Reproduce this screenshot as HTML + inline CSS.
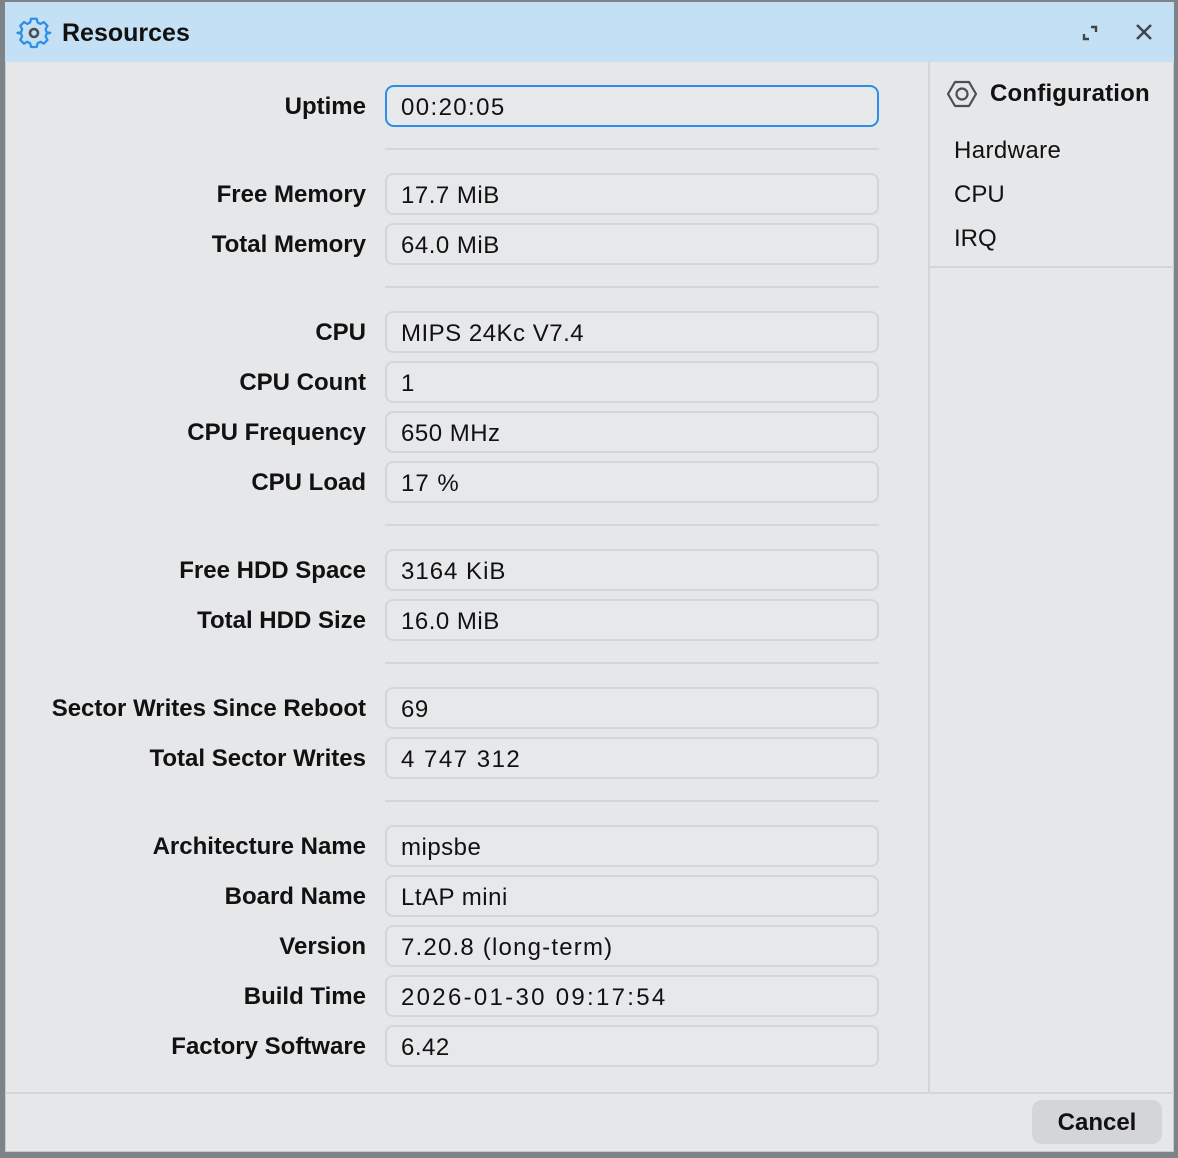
<!DOCTYPE html>
<html><head><meta charset="utf-8"><style>
*{box-sizing:border-box;margin:0;padding:0}
body{width:1178px;height:1158px;background:#7e8388;font-family:"Liberation Sans",sans-serif;position:relative;overflow:hidden;color:#111}
#win{position:absolute;left:5px;top:2px;width:1169px;height:1150px;background:#e6e7e9;border:1px solid #c6c9cd}
#title{position:absolute;left:5px;top:2px;width:1169px;height:60px;background:#c4e0f4}
.t{position:absolute;font-size:24px;white-space:nowrap}
.lab{position:absolute;right:812px;font-weight:bold;font-size:24px;white-space:nowrap;line-height:44px}
.f{position:absolute;left:385px;width:494px;height:42px;border:2px solid #d3d5d8;border-radius:8px;background:#e7e8ea;font-size:24px;line-height:41px;padding-left:14px;white-space:nowrap;letter-spacing:0.5px}
.sep{position:absolute;left:385px;width:494px;height:2px;background:#d3d5d8}
</style></head><body>
<div id="win"></div>
<div id="title"></div>
<svg style="position:absolute;left:16px;top:15px" width="36" height="36" viewBox="0 0 36 36"><path d="M15 3h6l1 4 3 1.5 3.5-2 4 4-2 3.5L31.5 17l4 1v0l-4 1-1 3 2 3.5-4 4-3.5-2L22 29l-1 4h-6l-1-4-3-1.5-3.5 2-4-4 2-3.5L4.5 19l-4-1 4-1 1-3-2-3.5 4-4 3.5 2L14 7z" fill="none" stroke="#2d8fe8" stroke-width="2.4" stroke-linejoin="round" transform="scale(0.94) translate(1,1)"/><circle cx="18" cy="18" r="4" fill="none" stroke="#4a4f55" stroke-width="2.6"/></svg>
<div class="t" style="left:62px;top:19px;font-weight:bold;font-size:25px">Resources</div>
<svg style="position:absolute;left:1081px;top:24px" width="18" height="18" viewBox="0 0 18 18"><path d="M3 10v5h5M10 3h5v5" fill="none" stroke="#3f4449" stroke-width="2.4"/></svg>
<svg style="position:absolute;left:1135px;top:23px" width="18" height="18" viewBox="0 0 18 18"><path d="M2 2L16 16M16 2L2 16" stroke="#3f4449" stroke-width="2.4"/></svg>
<div style="position:absolute;left:928px;top:62px;width:2px;height:1031px;background:#d3d5d8"></div>
<div style="position:absolute;left:930px;top:266px;width:244px;height:2px;background:#d3d5d8"></div>
<div style="position:absolute;left:5px;top:1092px;width:1169px;height:2px;background:#d3d5d8"></div>
<svg style="position:absolute;left:947px;top:80px" width="30" height="28" viewBox="0 0 30 28"><path d="M8 2h14l7 12-7 12H8L1 14z" fill="none" stroke="#4a4f55" stroke-width="2.2" stroke-linejoin="round"/><circle cx="15" cy="14" r="5.5" fill="none" stroke="#4a4f55" stroke-width="2.2"/></svg>
<div class="t" style="left:990px;top:80px;font-weight:bold;letter-spacing:0.2px">Configuration</div>
<div class="t" style="left:954px;top:137px;letter-spacing:0.4px">Hardware</div>
<div class="t" style="left:954px;top:181px">CPU</div>
<div class="t" style="left:954px;top:225px">IRQ</div>
<div style="position:absolute;left:1032px;top:1100px;width:130px;height:44px;background:#d3d5d8;border-radius:10px;font-weight:bold;font-size:24px;line-height:46px;text-align:center">Cancel</div>

<div class="lab" style="top:85px">Uptime</div><div class="f" style="top:85px;border-color:#2b8fea;border-radius:9px;letter-spacing:1.4px">00:20:05</div>
<div class="sep" style="top:148px"></div>
<div class="lab" style="top:173px">Free Memory</div><div class="f" style="top:173px">17.7 MiB</div>
<div class="lab" style="top:223px">Total Memory</div><div class="f" style="top:223px">64.0 MiB</div>
<div class="sep" style="top:286px"></div>
<div class="lab" style="top:311px">CPU</div><div class="f" style="top:311px">MIPS 24Kc V7.4</div>
<div class="lab" style="top:361px">CPU Count</div><div class="f" style="top:361px">1</div>
<div class="lab" style="top:411px">CPU Frequency</div><div class="f" style="top:411px">650 MHz</div>
<div class="lab" style="top:461px">CPU Load</div><div class="f" style="top:461px;letter-spacing:1px">17 %</div>
<div class="sep" style="top:524px"></div>
<div class="lab" style="top:549px">Free HDD Space</div><div class="f" style="top:549px;letter-spacing:1px">3164 KiB</div>
<div class="lab" style="top:599px">Total HDD Size</div><div class="f" style="top:599px">16.0 MiB</div>
<div class="sep" style="top:662px"></div>
<div class="lab" style="top:687px">Sector Writes Since Reboot</div><div class="f" style="top:687px">69</div>
<div class="lab" style="top:737px">Total Sector Writes</div><div class="f" style="top:737px;letter-spacing:1.5px">4 747 312</div>
<div class="sep" style="top:800px"></div>
<div class="lab" style="top:825px">Architecture Name</div><div class="f" style="top:825px">mipsbe</div>
<div class="lab" style="top:875px">Board Name</div><div class="f" style="top:875px">LtAP mini</div>
<div class="lab" style="top:925px">Version</div><div class="f" style="top:925px;letter-spacing:1.2px">7.20.8 (long-term)</div>
<div class="lab" style="top:975px">Build Time</div><div class="f" style="top:975px;letter-spacing:2.3px">2026-01-30 09:17:54</div>
<div class="lab" style="top:1025px">Factory Software</div><div class="f" style="top:1025px">6.42</div>
</body></html>
